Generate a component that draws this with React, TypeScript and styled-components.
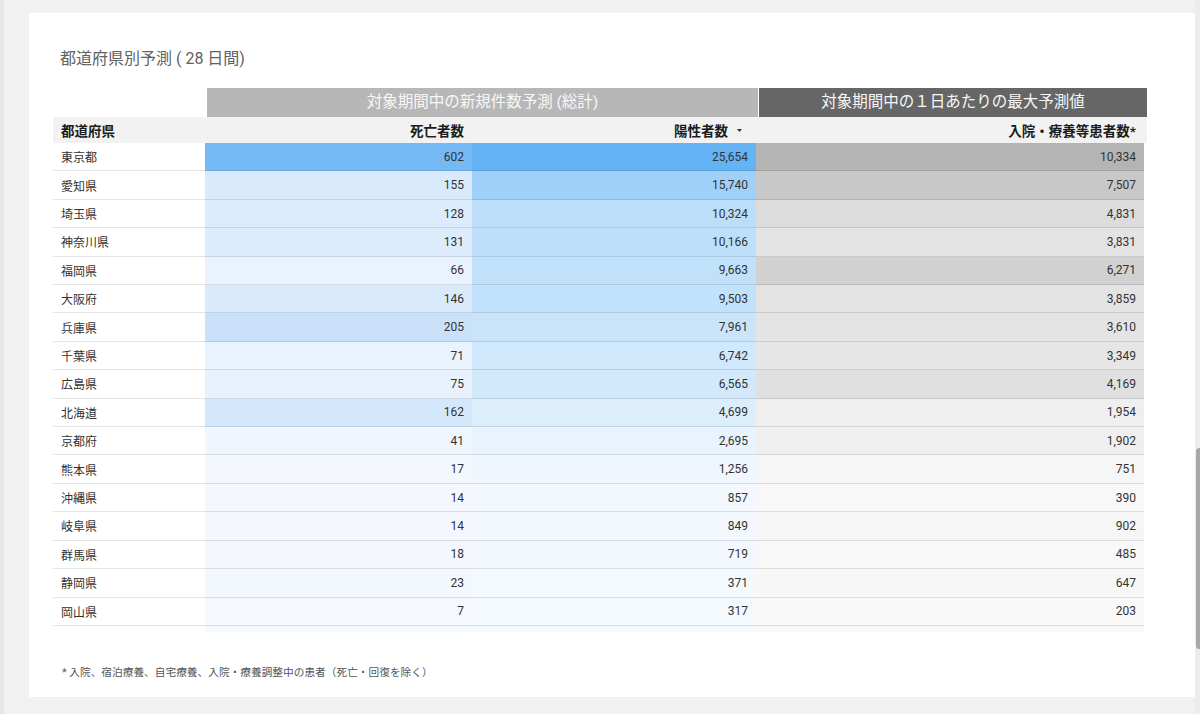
import React from "react";
import styled, { createGlobalStyle } from "styled-components";

const GlobalStyle = createGlobalStyle`
  html, body { margin: 0; padding: 0; }
  body {
    background: #f1f1f1;
    font-family: "Roboto", "Noto Sans CJK JP", "Noto Sans", sans-serif;
    -webkit-font-smoothing: antialiased;
  }
  * { box-sizing: border-box; }
`;

const COLS = "152px 267px 284px 388px";

const Page = styled.div`
  display: flex;
  height: 714px;
  background: #f1f1f1;
  overflow: hidden;
`;

const Canvas = styled.div`
  flex: 1;
  display: flex;
  border-left: 4px solid #e6e6e6;
  padding: 13px 0 17px 25px;
`;

const Card = styled.div`
  flex: 1;
  display: flex;
  flex-direction: column;
  background: #ffffff;
  padding: 0 48px 0 24px;
`;

const Title = styled.div`
  margin-top: 36px;
  padding-left: 7px;
  font-size: 16px;
  line-height: 20px;
  color: #616161;
`;

const GroupRow = styled.div`
  display: flex;
  gap: 1px;
  margin-top: 19px;
  padding-left: 154px;
  height: 29px;
`;

const GroupCell = styled.div<{ $w: number; $bg: string }>`
  flex: 0 0 ${(p) => p.$w}px;
  background: ${(p) => p.$bg};
  color: #f7f7f7;
  font-size: 15.5px;
  line-height: 29px;
  text-align: center;
  white-space: nowrap;
`;

const HeadRow = styled.div`
  display: grid;
  grid-template-columns: ${COLS};
  height: 26px;
  background: #f2f2f2;
`;

const HeadCell = styled.div<{ $align?: "start" | "end" }>`
  display: flex;
  align-items: center;
  justify-content: ${(p) => (p.$align === "start" ? "flex-start" : "flex-end")};
  padding: 0 8px;
  font-size: 13.5px;
  font-weight: 700;
  color: #1c1c1c;
  white-space: nowrap;
`;

const SortArrow = styled.svg`
  margin-left: 9px;
  margin-right: 6px;
  flex: 0 0 auto;
`;

const Row = styled.div`
  display: grid;
  grid-template-columns: ${COLS};
`;

const Cell = styled.div<{ $bg?: string; $align?: "start" | "end" }>`
  height: 28.42px;
  display: flex;
  align-items: center;
  justify-content: ${(p) => (p.$align === "start" ? "flex-start" : "flex-end")};
  padding: 0 8px;
  background: ${(p) => p.$bg || "#ffffff"};
  border-bottom: 1px solid rgba(0, 0, 0, 0.1);
  font-size: 12px;
  color: #333333;
  white-space: nowrap;
`;

const FillerCell = styled.div<{ $bg?: string }>`
  height: 6px;
  background: ${(p) => p.$bg || "transparent"};
`;

const Note = styled.div`
  margin-top: 34px;
  padding-left: 9px;
  font-size: 10.7px;
  line-height: 14px;
  color: #555555;
`;

const ScrollTrack = styled.div`
  flex: 0 0 8px;
  background: #ececec;
  padding-top: 448px;
`;

const Thumb = styled.div`
  margin-left: 1px;
  height: 201px;
  border-radius: 4px;
  background: #a8a8a8;
`;

type Rec = {
  pref: string;
  death: string;
  dBg: string;
  pos: string;
  pBg: string;
  hosp: string;
  hBg: string;
};

const rows: Rec[] = [
  { pref: "東京都", death: "602", dBg: "#74b9f4", pos: "25,654", pBg: "#63b3f5", hosp: "10,334", hBg: "#b4b4b4" },
  { pref: "愛知県", death: "155", dBg: "#d8eafb", pos: "15,740", pBg: "#9fd0f8", hosp: "7,507", hBg: "#c8c8c8" },
  { pref: "埼玉県", death: "128", dBg: "#dcecfc", pos: "10,324", pBg: "#bddef9", hosp: "4,831", hBg: "#dcdcdc" },
  { pref: "神奈川県", death: "131", dBg: "#dcecfc", pos: "10,166", pBg: "#bedffa", hosp: "3,831", hBg: "#e3e3e3" },
  { pref: "福岡県", death: "66", dBg: "#eaf3fd", pos: "9,663", pBg: "#c1e0fa", hosp: "6,271", hBg: "#d1d1d1" },
  { pref: "大阪府", death: "146", dBg: "#d9eafb", pos: "9,503", pBg: "#c2e1fa", hosp: "3,859", hBg: "#e3e3e3" },
  { pref: "兵庫県", death: "205", dBg: "#c9e2f9", pos: "7,961", pBg: "#cae5fa", hosp: "3,610", hBg: "#e4e4e4" },
  { pref: "千葉県", death: "71", dBg: "#e9f3fd", pos: "6,742", pBg: "#d0e8fb", hosp: "3,349", hBg: "#e6e6e6" },
  { pref: "広島県", death: "75", dBg: "#e8f2fd", pos: "6,565", pBg: "#d2e9fb", hosp: "4,169", hBg: "#e0e0e0" },
  { pref: "北海道", death: "162", dBg: "#d4e8fb", pos: "4,699", pBg: "#dcedfc", hosp: "1,954", hBg: "#efefef" },
  { pref: "京都府", death: "41", dBg: "#eff6fe", pos: "2,695", pBg: "#e8f3fd", hosp: "1,902", hBg: "#efefef" },
  { pref: "熊本県", death: "17", dBg: "#f4f8fe", pos: "1,256", pBg: "#eff6fe", hosp: "751", hBg: "#f6f6f6" },
  { pref: "沖縄県", death: "14", dBg: "#f4f8fe", pos: "857", pBg: "#f2f8fe", hosp: "390", hBg: "#f8f8f8" },
  { pref: "岐阜県", death: "14", dBg: "#f4f8fe", pos: "849", pBg: "#f2f8fe", hosp: "902", hBg: "#f6f6f6" },
  { pref: "群馬県", death: "18", dBg: "#f4f8fe", pos: "719", pBg: "#f3f8fe", hosp: "485", hBg: "#f8f8f8" },
  { pref: "静岡県", death: "23", dBg: "#f3f8fe", pos: "371", pBg: "#f4f9fe", hosp: "647", hBg: "#f7f7f7" },
  { pref: "岡山県", death: "7", dBg: "#f5f9fe", pos: "317", pBg: "#f4f9fe", hosp: "203", hBg: "#f9f9f9" },
];

export default function App() {
  const last = rows[rows.length - 1];
  return (
    <>
      <GlobalStyle />
      <Page>
        <Canvas>
          <Card>
            <Title>都道府県別予測 ( 28 日間)</Title>
            <GroupRow>
              <GroupCell $w={551} $bg="#b7b7b7">対象期間中の新規件数予測 (総計)</GroupCell>
              <GroupCell $w={388} $bg="#666666">対象期間中の１日あたりの最大予測値</GroupCell>
            </GroupRow>
            <HeadRow>
              <HeadCell $align="start">都道府県</HeadCell>
              <HeadCell>死亡者数</HeadCell>
              <HeadCell>
                陽性者数
                <SortArrow width="5" height="3" viewBox="0 0 5 3">
                  <path d="M0 0H5L2.5 3Z" fill="#333" />
                </SortArrow>
              </HeadCell>
              <HeadCell>入院・療養等患者数*</HeadCell>
            </HeadRow>
            {rows.map((r) => (
              <Row key={r.pref}>
                <Cell $align="start">{r.pref}</Cell>
                <Cell $bg={r.dBg}>{r.death}</Cell>
                <Cell $bg={r.pBg}>{r.pos}</Cell>
                <Cell $bg={r.hBg}>{r.hosp}</Cell>
              </Row>
            ))}
            <Row>
              <FillerCell />
              <FillerCell $bg={last.dBg} />
              <FillerCell $bg={last.pBg} />
              <FillerCell $bg={last.hBg} />
            </Row>
            <Note>* 入院、宿泊療養、自宅療養、入院・療養調整中の患者（死亡・回復を除く）</Note>
          </Card>
        </Canvas>
        <ScrollTrack>
          <Thumb />
        </ScrollTrack>
      </Page>
    </>
  );
}
